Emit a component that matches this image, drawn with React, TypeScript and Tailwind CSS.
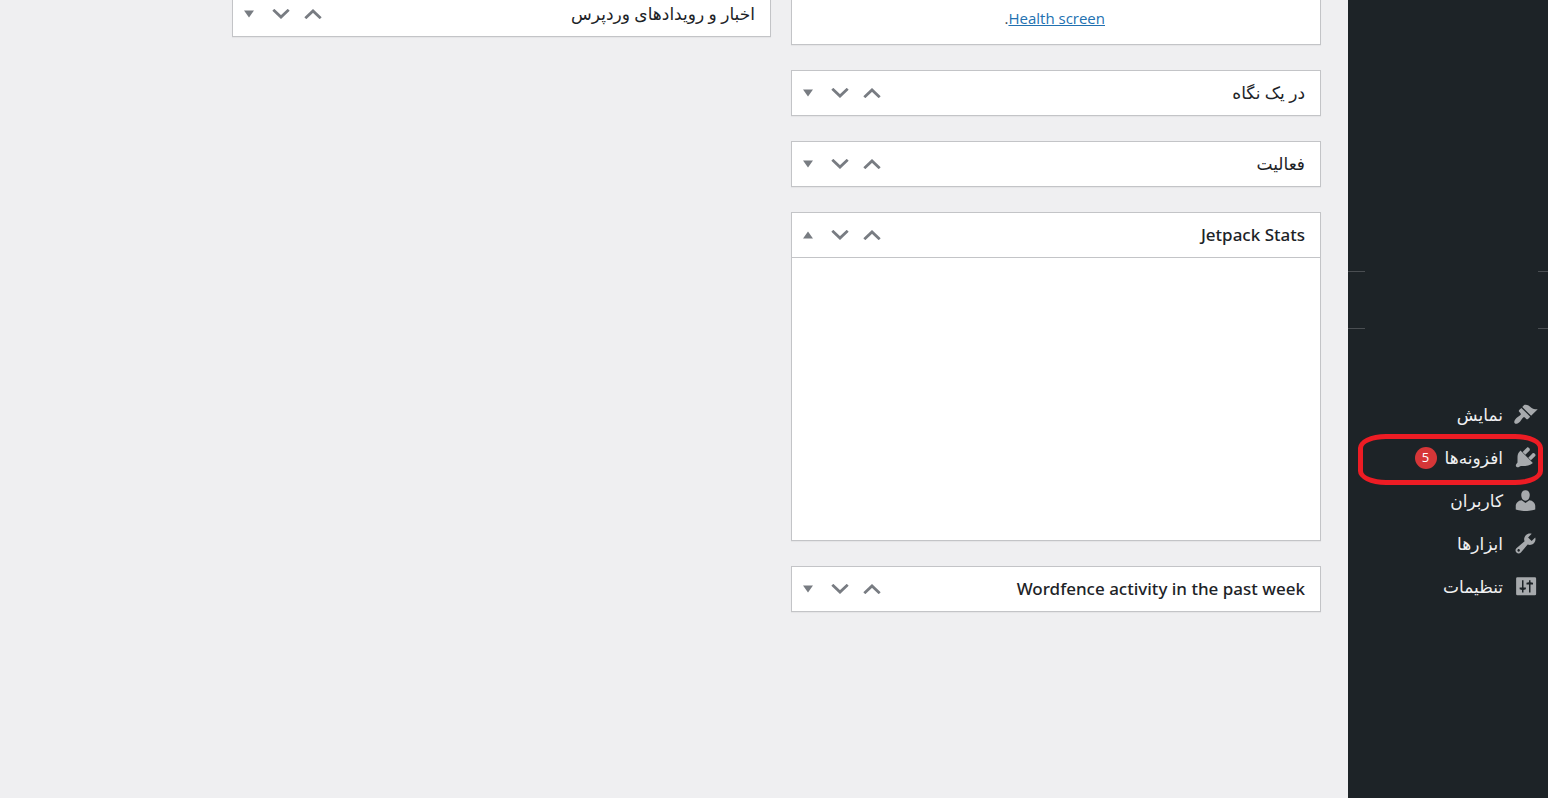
import type { ReactNode } from 'react';

type MenuItem = { label: string; icon: string; updates?: string; marked?: boolean };

// Dashicons, 20x20 grid
const MENU: MenuItem[] = [
  {
    label: 'نمایش',
    icon: 'M14.48 11.06L7.41 3.99l1.5-1.5c.5-.56 2.3-.47 3.51.32 1.21.8 1.43 1.28 2.91 2.1 1.18.64 2.45 1.26 4.45.85zm-.71.71L6.7 4.7 4.93 6.47c-.39.39-.39 1.02 0 1.41l1.06 1.06c.39.39.39 1.03 0 1.42-.6.6-1.43 1.11-2.21 1.69-.35.26-.7.53-1.01.84C1.43 14.23.4 16.08 1.4 17.07c.99 1 2.84-.03 4.18-1.36.31-.31.58-.66.85-1.02.57-.78 1.08-1.61 1.69-2.21.39-.39 1.02-.39 1.41 0l1.06 1.06c.39.39 1.02.39 1.41 0z',
  },
  {
    label: 'افزونه‌ها',
    icon: 'M13.3 4.3L9.9 7.7 7.7 5.5l3.4-3.4c.4-.4 1.2-.3 1.8.3s.8 1.500.4 1.900zM4.500 6.200L6 4.400l9.900 9.900-1.800 1.300c-1.200.7-2.900 1.100-4.300 1.100H6.300l-1.300.7c-.6.6-1.700.6-2.300 0s-.6-1.600 0-2.200l.9-1.200v-4c0-1.300.2-3 .9-3.800zM12.200 10.100l3.500-3.500c.4-.4 1.200-.3 1.800.3s.7 1.400.3 1.800l-3.500 3.500z',
    updates: '5',
    marked: true,
  },
  {
    label: 'کاربران',
    icon: 'M10 10.100c-2.500 0-3.400-2.600-3.400-4.700C6.600 3.200 7.900 1.700 10 1.700s3.400 1.500 3.400 3.700c0 2.100-.9 4.700-3.400 4.700zM10 11.900L13.100 9.700c2.700.2 4.700 2.300 4.700 4.700v2.800s-3.900 1.300-7.800 1.300-7.800-1.300-7.800-1.300v-2.800c0-2.400 2-4.500 4.700-4.700z',
  },
  {
    label: 'ابزارها',
    icon: 'M16.68 9.77c-1.34 1.34-3.3 1.67-4.95.99l-5.41 6.52c-.99.99-2.59.99-3.58 0s-.99-2.59 0-3.57l6.52-5.42c-.68-1.65-.35-3.61.99-4.95 1.28-1.28 3.12-1.62 4.72-1.06l-2.89 2.89 2.82 2.82 2.86-2.87c.53 1.58.18 3.39-1.08 4.65zM3.81 16.21c.4.39 1.04.39 1.43 0 .4-.4.4-1.04 0-1.43-.39-.4-1.03-.4-1.43 0-.39.39-.39 1.03 0 1.43z',
  },
  {
    label: 'تنظیمات',
    icon: 'M3.500 2.500h14a1 1 0 0 1 1 1v12.500a1 1 0 0 1-1 1h-14a1 1 0 0 1-1-1V3.500a1 1 0 0 1 1-1zM7.200 5v5.800H5.300v1.400l1.900.6v2h1.200v-2l1.900-.6v-1.400H8.400V5zM12.800 5v1.500l-2 .4v1.400h2v6.500h1.200V8.300h2V6.900l-2-.4V5z',
  },
];

function HandleButton({ label, children }: { label: string; children: ReactNode }) {
  return (
    <button
      type="button"
      aria-label={label}
      className="flex h-full w-8 items-center justify-center text-[#787c82]"
    >
      {children}
    </button>
  );
}

function Chevron({ up = false }: { up?: boolean }) {
  return (
    <svg viewBox="0 0 18 10" className="h-[10px] w-[18px]" fill="none" stroke="currentColor" strokeWidth="2.8">
      <path d={up ? 'M1.3 9.2L9 1.9l7.7 7.3' : 'M1.3.8L9 8.1 16.7.8'} />
    </svg>
  );
}

function Triangle({ up = false }: { up?: boolean }) {
  return (
    <svg viewBox="0 0 10 8" className="h-2 w-[10px]" fill="currentColor">
      <path d={up ? 'M0 7.5L5 .5l5 7z' : 'M0 .5h10l-5 7z'} />
    </svg>
  );
}

function Postbox({ title, children }: { title: string; children?: ReactNode }) {
  const open = Boolean(children);

  return (
    <section className="border border-[#c3c4c7] bg-white shadow-[0_1px_1px_rgba(0,0,0,0.04)]">
      <header className="flex h-11 items-center justify-between">
        <h2 className="px-[15px] font-['Noto_Sans','DejaVu_Sans',sans-serif] text-[17px] leading-6 font-medium text-[#1d2327]">
          {title}
        </h2>
        <div className="flex h-full">
          <HandleButton label="انتقال به بالا">
            <Chevron up />
          </HandleButton>
          <HandleButton label="انتقال به پایین">
            <Chevron />
          </HandleButton>
          <HandleButton label="باز و بسته کردن">
            <Triangle up={open} />
          </HandleButton>
        </div>
      </header>
      {children}
    </section>
  );
}

function MenuSeparator() {
  return (
    <div className="flex h-px justify-between">
      <span className="w-[10px] bg-[#4a4e52]" />
      <span className="w-[17px] bg-[#4a4e52]" />
    </div>
  );
}

function Sidebar() {
  return (
    <nav className="w-[200px] shrink-0 bg-[#1d2327] pt-[271px]">
      <MenuSeparator />
      <div className="h-14" />
      <MenuSeparator />
      <ul className="mt-16">
        {MENU.map((item) => (
          <li key={item.label} className="relative">
            <a href="#" className="flex h-[43px] items-center pr-[10px] text-[17px] leading-6 text-[#f0f0f1]">
              <svg viewBox="0 0 20 20" fillRule="evenodd" className="ml-[10px] size-[25px] fill-[#a7aaad]">
                <path d={item.icon} />
              </svg>
              {item.label}
              {item.updates && (
                <span className="mr-2 flex size-[22px] items-center justify-center rounded-full bg-[#d63638] text-[13px] leading-none text-white">
                  {item.updates}
                </span>
              )}
            </a>
            {item.marked && (
              <span className="pointer-events-none absolute -top-[2px] -bottom-[6px] right-[5px] left-[10px] rounded-[28px_/_14px] border-5 border-[#ed1c24]" />
            )}
          </li>
        ))}
      </ul>
    </nav>
  );
}

export default function App() {
  return (
    <div
      dir="rtl"
      className="flex min-h-screen overflow-hidden bg-[#efeff1] font-['Open_Sans','Noto_Sans','DejaVu_Sans',sans-serif]"
    >
      <Sidebar />
      <main className="-mt-[9px] grid flex-1 grid-cols-[530fr_539fr] items-start gap-5 pr-[27px] pl-58">
        <div className="flex flex-col gap-[25px]">
          <section className="border border-[#c3c4c7] bg-white pt-3 pr-[215px] pb-3 shadow-[0_1px_1px_rgba(0,0,0,0.04)]">
            <p className="text-[15px] leading-7 text-[#3c434a]">
              <a href="#" className="text-[#2271b1] underline">
                Health screen
              </a>
              .
            </p>
          </section>
          <Postbox title="در یک نگاه" />
          <Postbox title="فعالیت" />
          <Postbox title="Jetpack Stats">
            <div className="h-[283px] border-t border-[#c3c4c7]" />
          </Postbox>
          <Postbox title="Wordfence activity in the past week" />
        </div>
        <Postbox title="اخبار و رویدادهای وردپرس" />
      </main>
    </div>
  );
}
